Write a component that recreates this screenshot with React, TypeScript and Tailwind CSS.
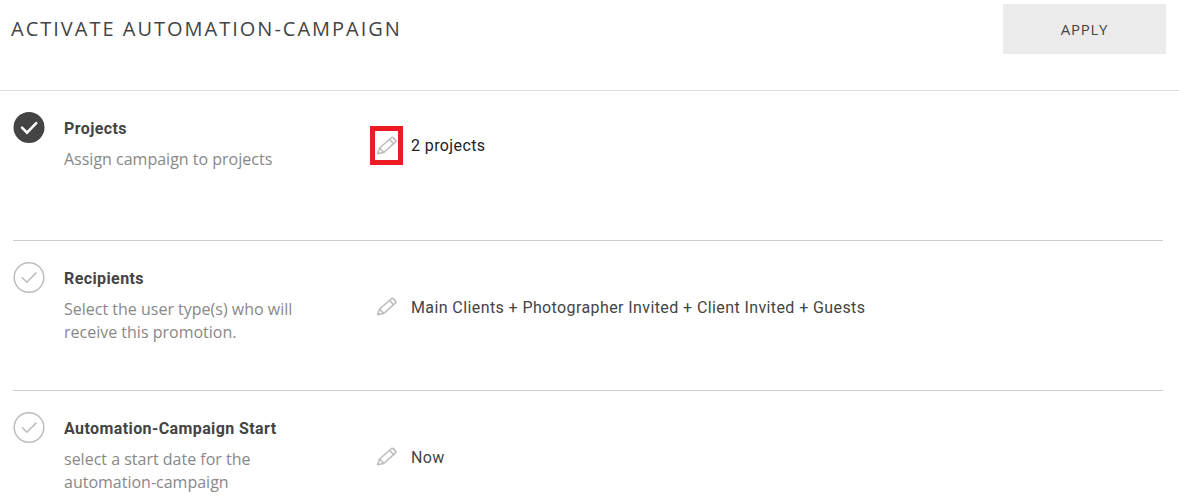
import clsx from 'clsx'

type Step = {
  title: string
  description: string
  value: string
  done?: boolean
  highlighted?: boolean
}

const steps: Step[] = [
  {
    title: 'Projects',
    description: 'Assign campaign to projects',
    value: '2 projects',
    done: true,
    highlighted: true,
  },
  {
    title: 'Recipients',
    description: 'Select the user type(s) who will receive this promotion.',
    value: 'Main Clients + Photographer Invited + Client Invited + Guests',
  },
  {
    title: 'Automation-Campaign Start',
    description: 'select a start date for the automation-campaign',
    value: 'Now',
  },
]

function StatusIcon({ done }: { done?: boolean }) {
  return (
    <svg width="32" height="32" viewBox="0 0 32 32" fill="none" className="shrink-0">
      {done ? (
        <>
          <circle cx="16" cy="15.5" r="15.5" fill="#444444" />
          <path d="M9 15.6l5 5 9.2-9.4" stroke="#ffffff" strokeWidth="2.6" strokeLinecap="round" />
        </>
      ) : (
        <>
          <circle cx="16" cy="15.5" r="14.8" stroke="#bdbdbd" strokeWidth="1.5" />
          <path d="M9 15.2l4.8 5 9.6-9.6" stroke="#bdbdbd" strokeWidth="1.6" />
        </>
      )}
    </svg>
  )
}

function PencilIcon() {
  return (
    <svg
      width="21"
      height="19"
      viewBox="0 0 21 19"
      fill="none"
      stroke="#bdbdbd"
      strokeWidth="1.6"
      strokeLinejoin="round"
      className="shrink-0"
    >
      <path d="M1.6 17.6l2-5.6L15.6 1.5q.8-.6 1.5.1l2.5 2.8q.6.8-.1 1.5L7.8 16.5z" />
      <path d="M3.6 12l4.2 4.5M13.6 3.3l4 4.5" />
    </svg>
  )
}

function StepRow({ step }: { step: Step }) {
  return (
    <li className="flex min-h-[150px] items-start border-b border-[#cccccc] pt-[21px] last:min-h-0 last:border-b-0">
      <StatusIcon done={step.done} />
      <div className="flex flex-1 items-center pl-[19px]">
        <div className="w-[306px] shrink-0 pt-[5px] pr-12 pb-[7px]">
          <h2 className="font-[Roboto,sans-serif] text-base leading-[23px] font-bold tracking-wide text-[#444444]">
            {step.title}
          </h2>
          <p className="mt-2 text-base leading-[23px] text-[#888888]">{step.description}</p>
        </div>
        <button
          type="button"
          aria-label={`Edit ${step.title}`}
          className={clsx(
            'flex h-[39px] w-[33px] shrink-0 items-center justify-center border-[5px]',
            step.highlighted ? 'border-[#ed1c24]' : 'border-transparent',
          )}
        >
          <PencilIcon />
        </button>
        <span
          className={clsx(
            'pt-0.5 pl-2 font-[Roboto,sans-serif] text-base tracking-wide',
            step.highlighted ? 'text-[#222222]' : 'text-[#444444]',
          )}
        >
          {step.value}
        </span>
      </div>
    </li>
  )
}

export default function App() {
  return (
    <main className="bg-white font-['Open_Sans',sans-serif]">
      <header className="flex items-start justify-between border-b border-[#dddddd] pt-1 pr-[13px] pb-9 pl-[11px]">
        <h1 className="text-xl leading-[50px] tracking-widest text-[#444444]">ACTIVATE AUTOMATION-CAMPAIGN</h1>
        <button type="button" className="h-[50px] w-[163px] bg-[#ebebeb] text-[15px] tracking-wider text-[#444444]">
          APPLY
        </button>
      </header>
      <ul className="mr-4 ml-[13px]">
        {steps.map((step) => (
          <StepRow key={step.title} step={step} />
        ))}
      </ul>
    </main>
  )
}
